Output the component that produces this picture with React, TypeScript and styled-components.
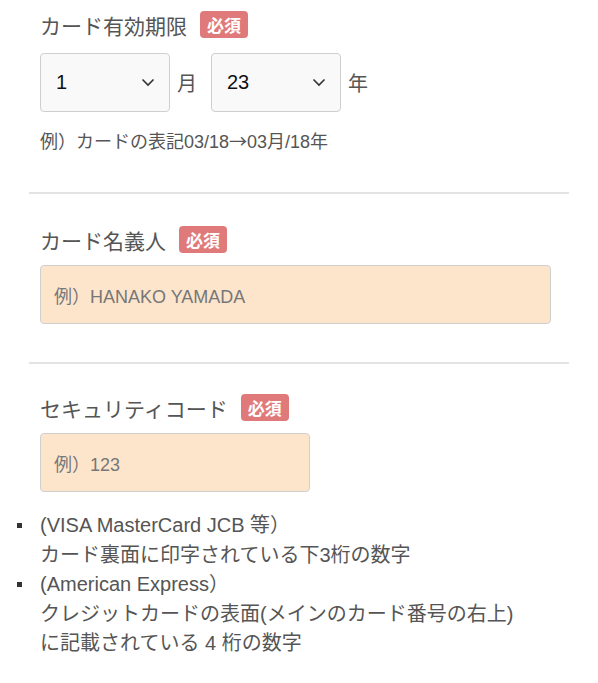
import React from 'react';
import styled, { createGlobalStyle } from 'styled-components';

const GlobalStyle = createGlobalStyle`
  body {
    margin: 0;
    background: #fff;
    font-family: 'Liberation Sans', 'Noto Sans CJK JP', sans-serif;
    color: #555;
  }
`;

const Page = styled.div`
  width: 598px;
  padding: 11px 29px 0;
  box-sizing: border-box;
`;

const Section = styled.section<{ $top?: number; $last?: boolean }>`
  padding: ${(p) => p.$top ?? 0}px 0 0 11px;
  border-bottom: ${(p) => (p.$last ? 'none' : '2px solid #e3e3e3')};
`;

const LabelRow = styled.div`
  display: flex;
  align-items: center;
  gap: 13px;
  height: 27px;
  font-size: 21px;
  color: #555;
`;

const Badge = styled.span`
  display: inline-flex;
  align-items: center;
  justify-content: center;
  height: 27px;
  padding: 0 7px;
  border-radius: 4px;
  background: #e07a7a;
  color: #fff;
  font-size: 17px;
  font-weight: bold;
`;

const SelectRow = styled.div`
  display: flex;
  align-items: center;
  margin-top: 15px;
`;

const SelectBox = styled.div`
  display: flex;
  align-items: center;
  justify-content: space-between;
  box-sizing: border-box;
  width: 130px;
  height: 59px;
  padding: 0 14px 0 15px;
  border: 1px solid #cfcfcf;
  border-radius: 4px;
  background: #f9f9f9;
  color: #111;
  font-size: 20px;
`;

const Unit = styled.span`
  font-size: 20px;
  color: #555;
  margin: 0 14px 0 7px;
`;

const Hint = styled.p`
  margin: 16px 0 38px;
  font-size: 18px;
  line-height: 24px;
  color: #555;
`;

const Arrow = styled.span`
  font-family: 'Noto Sans CJK JP', sans-serif;
`;

const TextField = styled.div<{ $width: number; $gap: number }>`
  display: flex;
  align-items: center;
  box-sizing: border-box;
  width: ${(p) => p.$width}px;
  height: 59px;
  margin: 12px 0 ${(p) => p.$gap}px;
  padding: 0 13px;
  border: 1px solid #cfcfcf;
  border-radius: 4px;
  background: #fde5cc;
  color: #777;
  font-size: 18px;
`;

const Notes = styled.ul`
  list-style: none;
  margin: 0;
  padding: 0;
  font-size: 20px;
  line-height: 29.5px;
  color: #555;
`;

const Note = styled.li`
  position: relative;

  &::before {
    content: '';
    position: absolute;
    left: -23px;
    top: 12px;
    width: 5px;
    height: 5px;
    background: #333;
  }
`;

const Chevron = () => (
  <svg width="14" height="9" viewBox="0 0 14 9" fill="none">
    <path d="M1.5 1.5 L7 7 L12.5 1.5" stroke="#333" strokeWidth="1.6" />
  </svg>
);

const Select = ({ value }: { value: string }) => (
  <SelectBox>
    <span>{value}</span>
    <Chevron />
  </SelectBox>
);

export default function App() {
  return (
    <Page>
      <GlobalStyle />
      <Section>
        <LabelRow>
          カード有効期限<Badge>必須</Badge>
        </LabelRow>
        <SelectRow>
          <Select value="1" />
          <Unit>月</Unit>
          <Select value="23" />
          <Unit>年</Unit>
        </SelectRow>
        <Hint>
          例）カードの表記03/18<Arrow>→</Arrow>03月/18年
        </Hint>
      </Section>
      <Section $top={32}>
        <LabelRow>
          カード名義人<Badge>必須</Badge>
        </LabelRow>
        <TextField $width={511} $gap={38}>例）HANAKO YAMADA</TextField>
      </Section>
      <Section $top={30} $last>
        <LabelRow>
          セキュリティコード<Badge>必須</Badge>
        </LabelRow>
        <TextField $width={270} $gap={19}>例）123</TextField>
        <Notes>
          <Note>
            (VISA MasterCard JCB 等）
            <br />
            カード裏面に印字されている下3桁の数字
          </Note>
          <Note>
            (American Express）
            <br />
            クレジットカードの表面(メインのカード番号の右上)
            <br />
            に記載されている 4 桁の数字
          </Note>
        </Notes>
      </Section>
    </Page>
  );
}
